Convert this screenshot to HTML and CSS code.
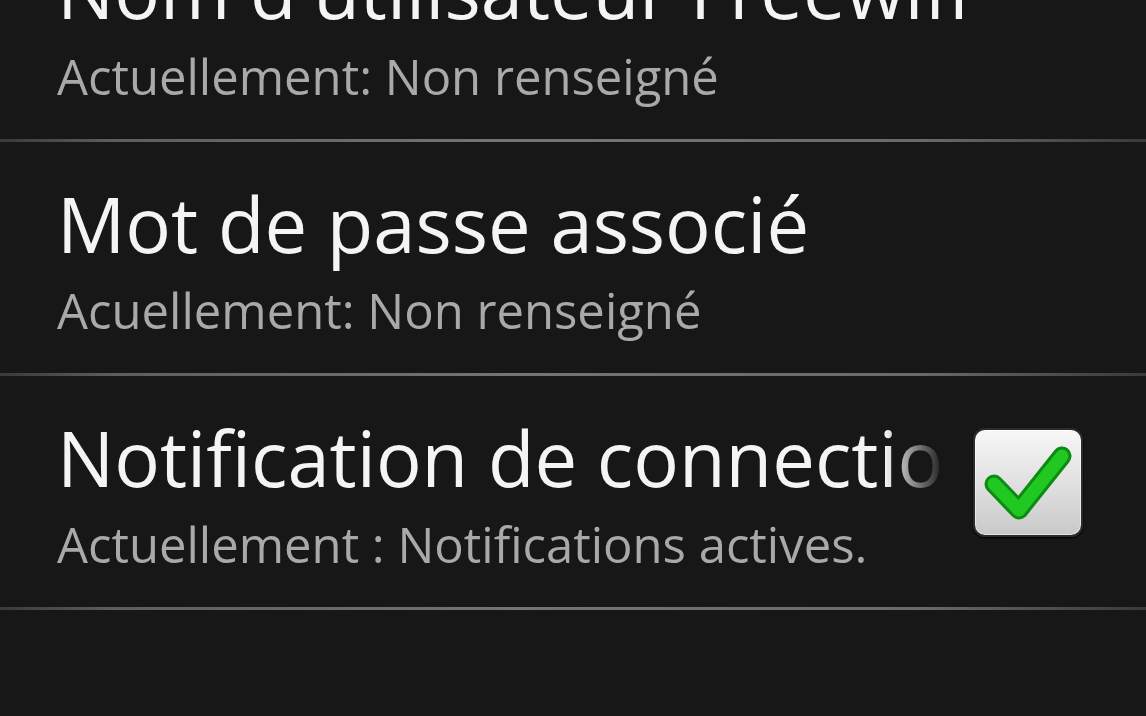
FILE: index.html
```html
<!DOCTYPE html>
<html lang="fr">

<head>
    <meta charset="UTF-8">
    <meta name="viewport" content="width=device-width, initial-scale=1.0">
    <title>Paramètres</title>
    <link rel="stylesheet" href="styles.css">
</head>

<body>
    <div class="prefs">
        <div class="pref">
            <div class="pref-text">
                <div class="pref-title">Nom d'utilisateur Freewifi</div>
                <div class="pref-summary">Actuellement: Non renseigné</div>
            </div>
        </div>
        <div class="divider"></div>

        <div class="pref">
            <div class="pref-text">
                <div class="pref-title">Mot de passe associé</div>
                <div class="pref-summary">Acuellement: Non renseigné</div>
            </div>
        </div>
        <div class="divider"></div>

        <div class="pref">
            <div class="pref-text">
                <div class="pref-title fade">Notification de connection</div>
                <div class="pref-summary">Actuellement : Notifications actives.</div>
            </div>
            <div class="checkbox checked">
                <svg viewBox="0 0 110 109" width="110" height="109">
                    <polyline class="tick-edge" points="21,56 46,82 89,28" />
                    <polyline class="tick" points="21,56 46,82 89,28" />
                </svg>
            </div>
        </div>
        <div class="divider"></div>
    </div>
</body>

</html>
```

FILE: styles.css
```css
* {
    margin: 0;
    padding: 0;
    box-sizing: border-box;
}

body {
    width: 100%;
    min-height: 100vh;
    background-color: #171717;
    font-family: "Open Sans", "Noto Sans", "DejaVu Sans", sans-serif;
    overflow: hidden;
}

/* list is scrolled: first row is partly above the top edge */
.prefs {
    margin-top: -92px;
}

.pref {
    display: flex;
    align-items: center;
    padding: 37px 63px 33px 57px;
}

.pref-text {
    flex: 1;
    min-width: 0;
}

.pref-title {
    font-size: 76px;
    line-height: 90px;
    color: #f4f4f4;
    white-space: nowrap;
}

/* long title fades out before the checkbox */
.pref-title.fade {
    overflow: hidden;
    -webkit-mask-image: linear-gradient(to right, #000 calc(100% - 60px), transparent);
    mask-image: linear-gradient(to right, #000 calc(100% - 60px), transparent);
}

.pref-summary {
    margin-top: 11px;
    font-size: 49px;
    line-height: 60px;
    color: #a9a9a9;
    white-space: nowrap;
}

.divider {
    height: 3px;
    background: linear-gradient(to right, #3a3a3a, #5e5e5e 10%, #747474 45%, #6a6a6a 80%, #3a3a3a);
}

.checkbox {
    flex: none;
    width: 110px;
    height: 109px;
    margin-left: 28px;
    margin-bottom: 22px;
    border: 2px solid #2c2c2c;
    border-radius: 12px;
    background: linear-gradient(to bottom, #f7f7f7, #dcdcdc 60%, #c9c9c9);
    box-shadow: inset 0 0 0 1px #ffffff80, 0 1px 2px #000;
    overflow: hidden;
}

.checkbox svg {
    display: block;
    margin: -2px;
}

.tick-edge {
    fill: none;
    stroke: #0c8a12;
    stroke-width: 19;
    stroke-linecap: round;
    stroke-linejoin: round;
}

.tick {
    fill: none;
    stroke: #22c822;
    stroke-width: 13;
    stroke-linecap: round;
    stroke-linejoin: round;
}
```
